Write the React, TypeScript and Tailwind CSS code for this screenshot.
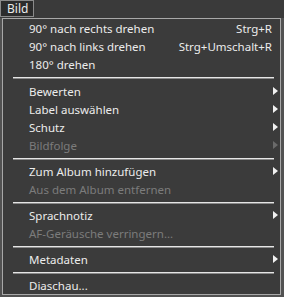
import React from "react";

type Item =
  | { type: "item"; label: string; shortcut?: string; sub?: boolean; disabled?: boolean }
  | { type: "sep"; first?: boolean };

const items: Item[] = [
  { type: "item", label: "90° nach rechts drehen", shortcut: "Strg+R" },
  { type: "item", label: "90° nach links drehen", shortcut: "Strg+Umschalt+R" },
  { type: "item", label: "180° drehen" },
  { type: "sep", first: true },
  { type: "item", label: "Bewerten", sub: true },
  { type: "item", label: "Label auswählen", sub: true },
  { type: "item", label: "Schutz", sub: true },
  { type: "item", label: "Bildfolge", sub: true, disabled: true },
  { type: "sep" },
  { type: "item", label: "Zum Album hinzufügen", sub: true },
  { type: "item", label: "Aus dem Album entfernen", disabled: true },
  { type: "sep" },
  { type: "item", label: "Sprachnotiz", sub: true },
  { type: "item", label: "AF-Geräusche verringern...", disabled: true },
  { type: "sep" },
  { type: "item", label: "Metadaten", sub: true },
  { type: "sep" },
  { type: "item", label: "Diaschau..." },
];

function Arrow({ disabled }: { disabled?: boolean }) {
  return (
    <svg width="5" height="8" viewBox="0 0 5 8" className="absolute left-[270px] top-[5px]">
      <polygon points="0,0 5,4 0,8" fill={disabled ? "#6a6a6a" : "#f0f0f0"} />
    </svg>
  );
}

export default function App() {
  return (
    <div
      className="w-[284px] h-[297px] bg-[#525252] flex flex-col text-[11.5px] leading-none"
      style={{ fontFamily: '"Noto Sans", "Open Sans", sans-serif' }}
    >
      <div className="h-[18px] flex items-start bg-[#3a3a3a]">
        <div className="h-[17px] w-[34px] border border-[#8a8a8a] bg-[#2c2c2c] text-[#eaeaea] text-[12px] flex items-center pl-[6px]">
          Bild
        </div>
      </div>
      <div className="ml-[2px] w-[279px] h-[277px] border border-[#a8a8a8] bg-[#3b3b3b]">
        {items.map((it, i) =>
          it.type === "sep" ? (
            <div
              key={i}
              className={`${it.first ? "h-[9px]" : "h-[8px]"} pt-[4px] pl-[10px] pr-[6px]`}
            >
              <div className="w-full h-[2px] border-t border-[#e6e6e6] border-b border-b-[#8a8a8a]" />
            </div>
          ) : (
            <div
              key={i}
              className={`relative h-[18px] flex items-center pt-[1px] pl-[26px] pr-[8px] ${
                it.disabled ? "text-[#7c7c7c]" : "text-[#ececec]"
              }`}
            >
              <span className="flex-1">{it.label}</span>
              {it.shortcut && <span>{it.shortcut}</span>}
              {it.sub && <Arrow disabled={it.disabled} />}
            </div>
          )
        )}
      </div>
    </div>
  );
}
